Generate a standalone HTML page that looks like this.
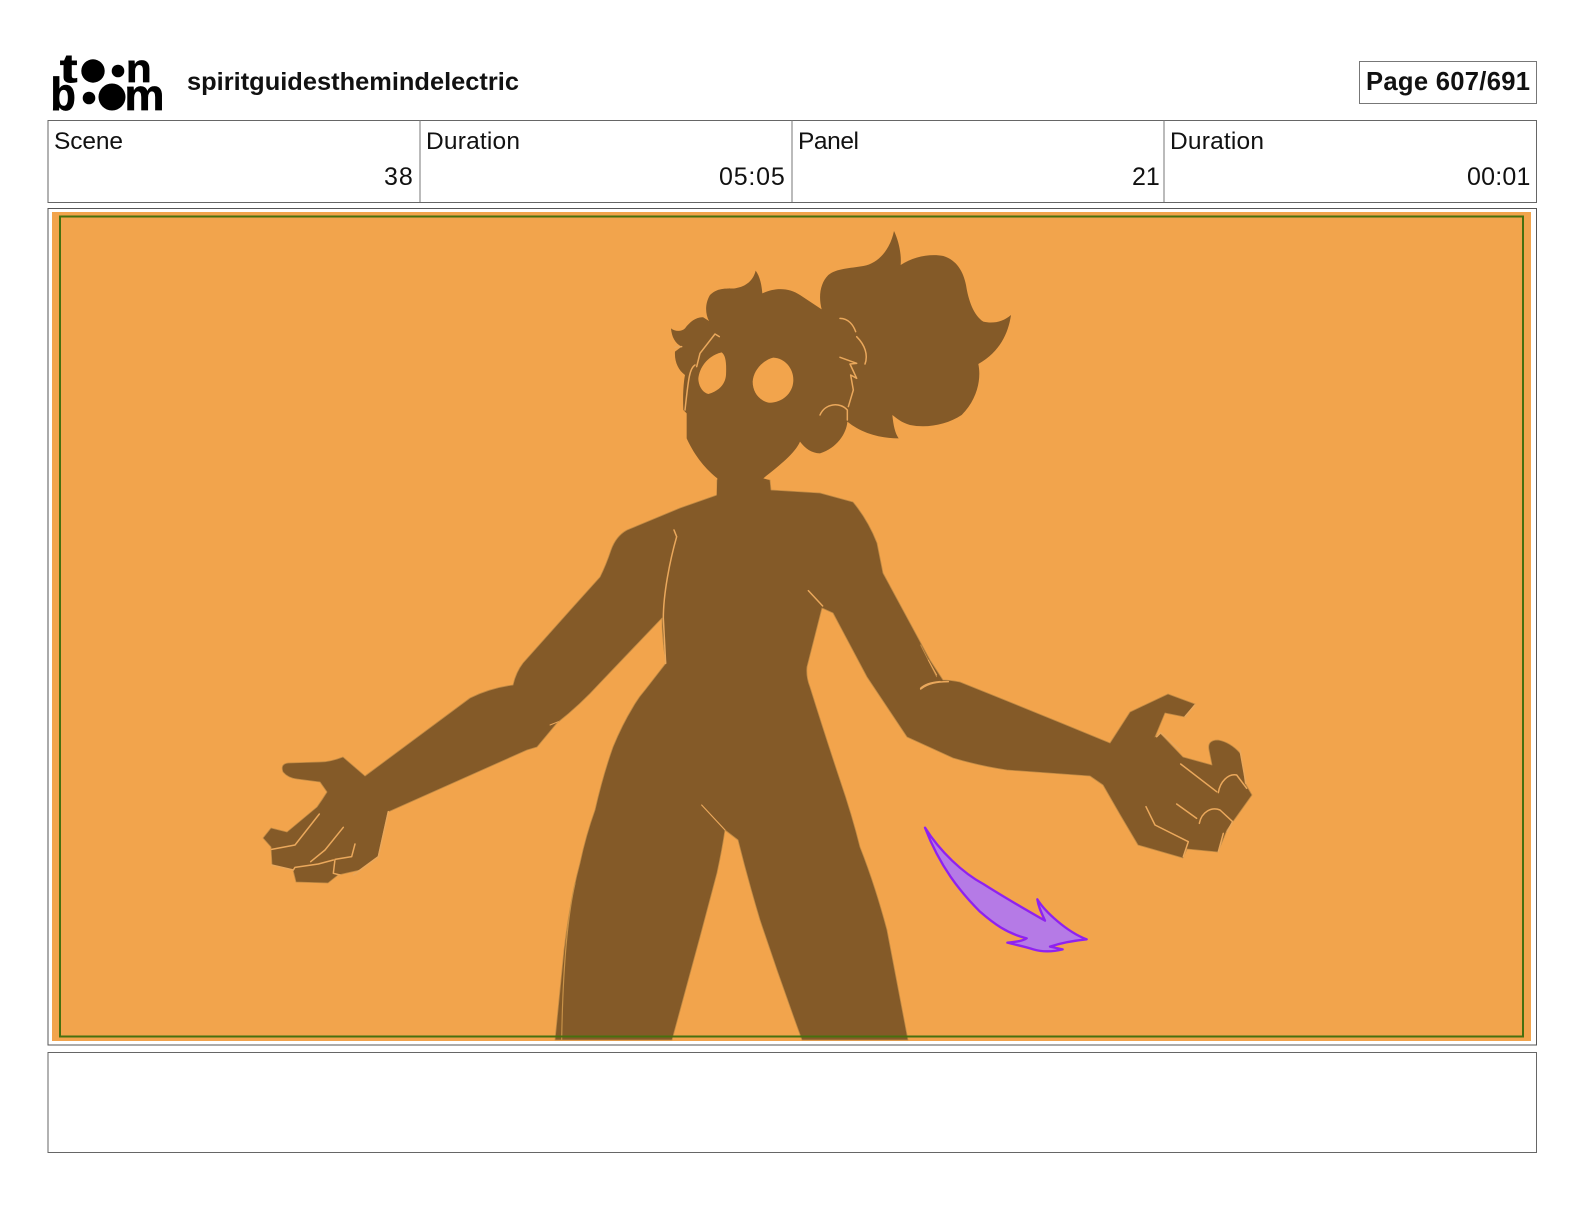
<!DOCTYPE html>
<html lang="en">
<head>
<meta charset="utf-8">
<title>spiritguidesthemindelectric</title>
<style>
html,body{margin:0;padding:0;background:#fff;width:1584px;height:1224px;overflow:hidden}
svg{display:block}
text{font-family:"Liberation Sans",sans-serif;fill:#111}
</style>
</head>
<body>
<svg width="1584" height="1224" viewBox="0 0 1584 1224" xmlns="http://www.w3.org/2000/svg">
<rect width="1584" height="1224" fill="#fff"/>

<!-- logo -->
<g style="font-weight:700">
  <text font-size="40" stroke="#000" stroke-width=".9" transform="translate(60 82) scale(1.3 1)" style="fill:#000">t</text>
  <text font-size="40" stroke="#000" stroke-width=".7" transform="translate(126 82) scale(1.05 1)" style="fill:#000">n</text>
  <text font-size="46" stroke="#000" stroke-width=".7" transform="translate(50.500 110) scale(.9 1)" style="fill:#000">b</text>
  <text font-size="44" stroke="#000" stroke-width=".7" transform="translate(124.500 110) scale(1.02 1)" style="fill:#000">m</text>
</g>
<circle cx="93" cy="71" r="11.700" fill="#000"/>
<circle cx="118" cy="71" r="6.300" fill="#000"/>
<circle cx="89" cy="98" r="6.300" fill="#000"/>
<circle cx="112" cy="97" r="13.500" fill="#000"/>

<text x="187" y="90" font-size="25.400" font-weight="700" textLength="332" lengthAdjust="spacing">spiritguidesthemindelectric</text>

<!-- page box -->
<rect x="1359.500" y="61.500" width="177" height="42" fill="#fff" stroke="#777" stroke-width="1"/>
<text x="1366" y="90" font-size="25.600" font-weight="700" textLength="164" lengthAdjust="spacing">Page 607/691</text>

<!-- info table -->
<rect x="48" y="120.500" width="1488.500" height="82" fill="#fff" stroke="#666" stroke-width="1"/>
<path d="M420 120v82M792 120v82M1164 120v82" stroke="#777" stroke-width="1" fill="none"/>
<g font-size="24.500">
  <text x="54" y="149" textLength="69" lengthAdjust="spacing">Scene</text>
  <text x="426" y="149" textLength="94" lengthAdjust="spacing">Duration</text>
  <text x="798" y="149" textLength="61" lengthAdjust="spacing">Panel</text>
  <text x="1170" y="149" textLength="94" lengthAdjust="spacing">Duration</text>
  <text x="384" y="185" font-size="25" letter-spacing="1">38</text>
  <text x="719" y="185" font-size="25" letter-spacing=".8">05:05</text>
  <text x="1132" y="185" font-size="25">21</text>
  <text x="1467" y="185" font-size="25" letter-spacing=".2">00:01</text>
</g>

<!-- image frame -->
<rect x="48" y="208.500" width="1488.500" height="836.500" fill="#fff" stroke="#555" stroke-width="1"/>
<rect x="52" y="212" width="1479" height="829" fill="#f2a44c"/>

<!-- figure -->
<clipPath id="c"><rect x="52" y="212" width="1479" height="829"/></clipPath>
<g clip-path="url(#c)">
  <!-- body -->
  <path fill="#845a28" stroke="#c08a45" stroke-width=".8" stroke-linejoin="round" d="M717 480L717 495L680 508L627 530Q616 536 611 550Q606 565 600 577L573 607L523 663Q516 672 513 685Q490 688 470 698L365 776L343 757Q330 762 320 762L288 763Q280 764 283 772Q288 778 297 779L320 782L327 792Q322 800 317 807L287 832L271 828L263 838L271 847L272 865L293 870L296 882L328 883L338 875L360 870L378 857L388 812L527 750L537 747L557 723Q580 705 600 683L662 618Q662 640 666 663L645 690Q638 698 633 707Q622 725 613 747Q603 775 595 810Q586 835 580 863Q570 900 564 950L555 1040L672 1040L700 937L717 873Q722 850 725 830L738 840Q748 880 760 920Q780 980 802 1040L908 1040L887 930Q875 885 860 847Q852 815 840 780Q825 735 810 687Q806 677 807 667L822 608L833 613Q850 645 867 677L907 737L953 758Q980 766 1007 770L1090 776L1103 785Q1120 815 1138 845L1183 858L1187 849L1218 852L1227 830L1252 795L1245 783Q1243 760 1240 753Q1230 742 1218 740Q1207 740 1209 750L1212 765L1183 757L1160 733L1155 737L1165 713L1185 717L1195 704L1168 694L1130 712L1110 743Q1035 712 960 682Q950 680 943 680L930 660L883 573L877 543Q868 520 853 502L820 493L771 490L770 480Z"/>
  <!-- head and hair -->
  <g transform="translate(640 220) scale(.33333)">
    <path fill="#845a28" d="M230 830L232 775C200 750 165 710 140 655L140 580L130 570C128 530 130 490 135 465C115 450 103 425 105 395L125 380C105 370 95 350 93 325C105 335 125 335 135 325C150 305 170 290 190 292L207 303C195 280 195 250 210 225C235 200 265 207 285 205C320 200 340 180 347 152C360 170 365 195 367 220C410 200 450 205 480 225L545 268C535 230 540 190 565 165C590 145 630 145 670 138C715 130 750 90 762 33C775 60 785 100 782 135C820 110 870 100 910 108C950 120 970 155 978 195C985 240 1000 285 1030 305C1060 312 1090 305 1113 285C1105 340 1080 395 1015 432C1025 480 1010 540 965 585C920 615 860 625 810 615C785 608 770 595 757 585C760 615 765 640 776 655C720 655 665 640 622 605C620 640 590 685 540 700C515 700 495 685 480 665C465 700 420 735 370 775L388 780L392 830Z"/>
    <path fill="#f2a44c" d="M245 397C256 405 260 425 258 465C256 490 240 512 205 522C188 518 175 498 175 475C178 445 200 408 245 397Z"/>
    <path fill="#f2a44c" d="M400 413C435 415 460 445 460 480C460 520 425 550 385 548C355 540 338 515 338 485C340 450 370 420 400 413Z"/>
    <g fill="none" stroke="#eaa85c" stroke-width="4.500" stroke-linecap="round" stroke-linejoin="round">
      <path d="M238 350L225 342L180 400L170 440"/>
      <path d="M165 435C148 445 145 480 135 570"/>
      <path d="M105 382L125 380"/>
      <path d="M600 295C625 295 640 315 647 335"/>
      <path d="M650 350C675 375 685 405 675 432"/>
      <path d="M600 412L650 430L630 432L650 475L632 465L640 510L625 560"/>
      <path d="M540 585C555 550 600 545 622 570L622 600"/>
    </g>
  </g>
  <!-- sketch lines on body -->
  <g transform="translate(500 480) scale(.33333)" fill="none" stroke="#eaa85c" stroke-width="4.500" stroke-linecap="round">
    <path d="M522 150L530 170C510 240 490 340 490 415L497 550"/>
    <path d="M925 332L968 378"/>
    <path d="M1262 625C1275 612 1295 607 1320 605"/>
    <path d="M1262 495L1310 590" stroke="#c08a45" stroke-width="3"/>
    <path d="M150 735L175 725" stroke-width="3"/>
  </g>
  <!-- legs -->
  <g transform="translate(520 780) scale(.33333)" fill="none" stroke-linecap="round">
    <path d="M165 310C140 420 128 600 125 780" stroke="#c89248" stroke-width="3.500"/>
    <path d="M545 75L615 150" stroke="#eaa85c" stroke-width="3.500"/>
  </g>
  <!-- left hand lines -->
  <g transform="translate(250 660) scale(.33333)" fill="none" stroke="#eaa85c" stroke-width="4.500" stroke-linecap="round" stroke-linejoin="round">
    <path d="M208 462L135 555L65 568"/>
    <path d="M280 502L225 570L182 605"/>
    <path d="M315 552L305 590L255 598L250 640L270 645"/>
    <path d="M65 615L130 630L135 622L205 612L250 600"/>
    <path d="M415 455L385 590L310 645"/>
  </g>
  <!-- right arm, hand lines, arrow -->
  <g transform="translate(890 660) scale(.33333)" fill="none" stroke-linecap="round" stroke-linejoin="round">
    <g stroke="#eaa85c" stroke-width="4.500">
      <path d="M92 87C115 70 140 65 175 65"/>
      <path d="M115 0L140 45" stroke-width="3"/>
      <path d="M872 312L980 395"/>
      <path d="M985 398C990 365 1015 340 1040 345L1070 385"/>
      <path d="M860 432L920 475"/>
      <path d="M928 490C935 455 965 440 990 450L1028 485L1012 515"/>
      <path d="M768 440L795 495L895 545L880 590"/>
      <path d="M800 230L812 218L870 270"/>
      <path d="M915 135L885 170"/>
      <path d="M1050 270L1068 370"/>
      <path d="M1000 520L985 575"/>
    </g>
    <path fill="#b57ae6" stroke="#8f22f0" stroke-width="7" d="M105 503C150 575 220 640 280 672C340 710 400 745 465 782C455 760 445 740 442 718C465 755 530 815 590 838C550 842 510 850 480 860L518 868C490 875 460 877 430 868C405 860 380 855 352 848C370 846 395 845 410 835C350 820 310 790 270 755C210 695 150 620 105 503Z"/>
  </g>
</g>

<!-- safe area -->
<rect x="60" y="216.500" width="1463" height="820" fill="none" stroke="#47700f" stroke-width="2"/>

<!-- caption box -->
<rect x="48" y="1052.500" width="1488.500" height="100" fill="#fff" stroke="#666" stroke-width="1"/>
</svg>
</body>
</html>
